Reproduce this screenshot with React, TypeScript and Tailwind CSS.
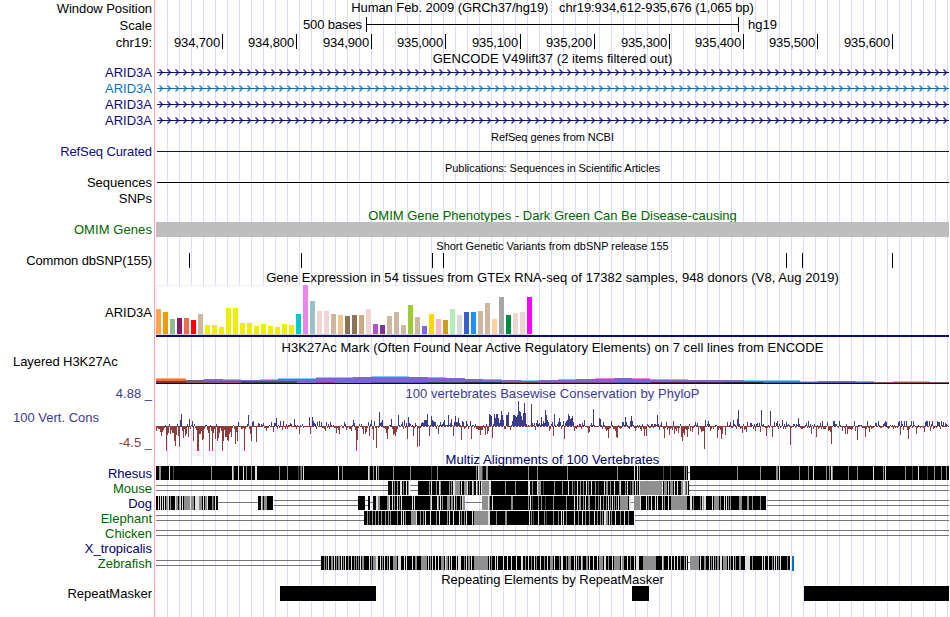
import type { ReactNode } from "react";

// Every track is drawn in browser pixel coordinates: data starts at x=156.
const LEFT = 156;
const WIDTH = 793;
const RIGHT = LEFT + WIDTH;

interface LabelProps {
  children: ReactNode;
  className?: string;
}

const Label = ({ children, className = "" }: LabelProps) => (
  <div className={`flex shrink-0 items-center justify-end whitespace-pre pr-[2px] ${className}`}>
    {children}
  </div>
);

interface TitleProps {
  children: ReactNode;
  className: string;
}

const Title = ({ children, className }: TitleProps) => (
  <div className={`flex shrink-0 items-center justify-center whitespace-pre ${className}`}>{children}</div>
);

interface TrackProps {
  top: number;
  height: number;
  children: ReactNode;
}

const Track = ({ top, height, children }: TrackProps) => (
  <svg
    className="block shrink-0"
    width={WIDTH}
    height={height}
    viewBox={`${LEFT} ${top} ${WIDTH} ${height}`}
    shapeRendering="crispEdges"
  >
    {children}
  </svg>
);

const ticks = [
  { label: "934,700", width: "w-[67px]" },
  { label: "934,800", width: "w-[74px]" },
  { label: "934,900", width: "w-[75px]" },
  { label: "935,000", width: "w-[74px]" },
  { label: "935,100", width: "w-[75px]" },
  { label: "935,200", width: "w-[74px]" },
  { label: "935,300", width: "w-[75px]" },
  { label: "935,400", width: "w-[74px]" },
  { label: "935,500", width: "w-[74px]" },
  { label: "935,600", width: "w-[75px]" },
];

const transcripts = [
  { y: 72, color: "#0c0c78" },
  { y: 88, color: "#0c72b4" },
  { y: 104, color: "#0c0c78" },
  { y: 120, color: "#0c0c78" },
];

const snps = [189, 301, 432, 443, 786, 802, 892];

const repeats = [
  [280, 96],
  [632, 17],
  [804, 145],
];

// GTEx expression bars: [height, tissue colour]
const tissues: [number, string][] = [
  [25, "#ffa54f"], [22, "#ee9a00"], [15, "#8fbc8f"], [16, "#8b1c62"], [16, "#ee6a50"], [14, "#ff0000"],
  [20, "#cdb79e"], [9, "#eeee00"], [9, "#eeee00"], [7, "#eeee00"], [26, "#eeee00"], [26, "#eeee00"],
  [11, "#eeee00"], [11, "#eeee00"], [8, "#eeee00"], [10, "#eeee00"], [8, "#eeee00"], [7, "#eeee00"],
  [10, "#eeee00"], [9, "#eeee00"], [20, "#00cdcd"], [49, "#ee82ee"], [33, "#9ac0cd"], [23, "#eed5d2"],
  [23, "#eed5d2"], [20, "#cdb79e"], [19, "#eec591"], [18, "#8b7355"], [19, "#8b7355"], [19, "#cdaa7d"],
  [25, "#eed5d2"], [10, "#b452cd"], [9, "#7a378b"], [18, "#cdb79e"], [22, "#cdb79e"], [9, "#cdb79e"],
  [29, "#9acd32"], [17, "#cdb79e"], [8, "#7a67ee"], [20, "#ffd700"], [15, "#ffb6c1"], [14, "#cd9b1d"],
  [25, "#b4eeb4"], [19, "#d9d9d9"], [22, "#3a5fcd"], [22, "#1e90ff"], [23, "#cdb79e"], [31, "#cdb79e"],
  [15, "#ffd39b"], [37, "#a6a6a6"], [19, "#008b45"], [21, "#eed5d2"], [22, "#eed5d2"], [37, "#ff00ff"],
];

// H3K27Ac layers: [x, y, width, height, colour], painted back to front
const PURPLE = "#7c64d4";
const CYAN = "#78ccff";
const PINK = "#f484cc";
const layers: [number, number, number, number, string][] = [
  [156, 378, 30, 1, "#ffb860"],
  [156, 379, 30, 2, "#ff6460"],
  [156, 381, 30, 2, "#803438"],
  [186, 380, 74, 3, "#805868"],
  [204, 379, 19, 2, PURPLE],
  [223, 380, 18, 1, PURPLE],
  [223, 379, 18, 1, CYAN],
  [241, 380, 56, 2, PURPLE],
  [260, 379, 18, 1, CYAN],
  [278, 379, 38, 2, PURPLE],
  [278, 378, 38, 1, CYAN],
  [241, 381, 75, 1, "#5c5078"],
  [297, 380, 19, 3, PURPLE],
  [316, 378, 37, 5, PURPLE],
  [316, 377, 37, 1, CYAN],
  [353, 377, 75, 6, PURPLE],
  [371, 376, 38, 1, CYAN],
  [428, 378, 37, 4, PURPLE],
  [428, 377, 18, 1, PINK],
  [465, 379, 37, 3, PURPLE],
  [483, 379, 19, 1, PINK],
  [502, 380, 74, 2, PURPLE],
  [521, 380, 18, 1, CYAN],
  [558, 379, 18, 1, PINK],
  [576, 379, 112, 3, PURPLE],
  [688, 380, 56, 2, PURPLE],
  [595, 378, 55, 1, PINK],
  [614, 378, 18, 1, PURPLE],
  [650, 379, 19, 1, PINK],
  [669, 379, 19, 1, CYAN],
  [744, 380, 56, 1, CYAN],
  [744, 381, 112, 1, PURPLE],
  [800, 381, 18, 1, CYAN],
  [744, 382, 130, 1, "#4c58a8"],
  [856, 381, 18, 1, PINK],
  [874, 382, 75, 1, "#905060"],
  [893, 381, 37, 1, CYAN],
  [241, 382, 56, 1, "#344c50"],
  [316, 382, 18, 1, "#8c3890"],
  [371, 382, 57, 1, "#5450b0"],
  [428, 382, 37, 1, "#344c50"],
  [465, 382, 37, 1, "#24384c"],
  [502, 382, 37, 1, "#80404c"],
  [539, 382, 74, 1, "#804c84"],
  [613, 382, 38, 1, "#4c54a4"],
  [651, 382, 74, 1, "#582c40"],
  [725, 382, 38, 1, "#28303c"],
];

// PhyloP scores in pixels, rows of twelve columns: [x, ...scores]
const phylop: number[][] = [
  [155, 0, -5, -2, -3, -3, -6, -10, -6, -4, -2, 1, -24],
  [167, -9, -7, 2, -8, -4, -7, -7, -15, -20, -9, 2, -10],
  [179, -21, 6, 12, -5, -12, -3, -10, -8, 2, -11, 7, -3],
  [191, 1, 5, -15, 2, -2, -4, -24, -24, -8, -8, -5, -14],
  [203, -13, -3, 1, 1, -4, -7, -24, 1, -5, -24, -7, -3],
  [215, -13, 2, -15, -12, -7, -2, -5, -24, -15, -4, -11, -11],
  [227, -14, -15, -8, -6, -11, -2, 1, -3, -18, -6, -15, 4],
  [239, -1, -1, -3, -3, -2, -24, -3, -1, 2, 11, -3, -8],
  [251, -15, 4, 5, -1, -1, -16, -1, 3, 2, -1, 2, 1],
  [263, 3, -2, -2, -5, -2, -2, 1, -1, 4, -1, -6, 3],
  [275, 3, 8, -3, 1, -2, 5, -1, -4, 5, -1, -3, 2],
  [287, -3, 1, 1, 3, 2, -1, -1, 7, 1, -3, 1, -1],
  [299, -8, 1, -1, 2, -2, -1, -1, -1, -1, -1, 9, -8],
  [311, -1, 9, 5, 3, 2, -3, 4, -1, 5, -1, 4, -2],
  [323, -2, -3, -5, 4, -2, 2, -3, 4, 1, -1, 1, -2],
  [335, -2, -7, -2, -4, -8, -1, 1, -2, -2, 4, 2, -4],
  [347, -2, -1, -3, -3, -5, 1, 6, 3, -4, -24, -14, -2],
  [359, 2, -1, 2, -3, -8, -1, -8, -6, -2, 4, -10, 2],
  [371, 6, -3, -14, 5, -2, -22, -1, -2, 14, 3, 4, 6],
  [383, -2, -2, -3, -7, -13, -3, 1, 1, 7, -3, -9, -8],
  [395, -10, -6, -3, 11, 1, -1, 2, 4, -3, 6, -2, 3],
  [407, -13, 9, 3, 2, -1, 1, -10, -2, 3, 1, -21, -2],
  [419, -20, -2, 3, 4, 3, 6, 6, 6, 12, 1, -10, 1],
  [431, 10, 6, 5, 4, 4, -3, 1, -8, 1, 4, 1, 2],
  [443, 4, 6, 1, 1, 1, 11, 1, 3, 7, 1, -10, 4],
  [455, 10, 4, 4, 8, 3, 1, -14, 5, 4, -3, -2, 5],
  [467, 2, -3, -1, 5, -13, 1, 1, -2, 2, -3, -3, -4],
  [479, -4, -9, -4, -4, 1, -2, -9, 2, -8, -5, 12, 11],
  [491, 10, -12, 2, 12, 8, 12, 12, 8, 3, 6, 15, 11],
  [503, 6, -3, -3, 11, 11, 14, -1, -4, 1, 5, 11, 11],
  [515, 10, 9, 11, 25, 15, 14, 10, 6, 13, 23, 13, 2],
  [527, -1, 1, -1, 1, 22, 3, 1, 3, -4, 3, 6, 2],
  [539, 3, 1, 9, 2, 5, 3, 16, 11, 6, 4, -5, -3],
  [551, 2, 4, -10, 12, 1, -1, 2, 4, 8, 4, -3, 1],
  [563, 5, -13, 3, 5, 6, 12, 10, 7, 8, 10, 4, -5],
  [575, -2, -3, 1, -1, 2, 2, -3, 3, 1, 6, -1, -1],
  [587, -2, -7, -6, 1, 3, 1, 17, 1, -1, -1, -1, -1],
  [599, 8, 7, 1, -3, 4, 1, -3, -5, -4, -12, -3, -2],
  [611, 5, 1, -3, -3, -5, -11, -12, 1, -2, -3, -2, 4],
  [623, 4, 1, 9, 4, 1, -2, -3, 5, 10, 5, 1, -2],
  [635, -5, -2, 1, -2, 1, -3, -5, 2, -3, -10, -3, -10],
  [647, 2, 1, -2, -2, 2, 2, -2, 2, 2, 1, 11, 2],
  [659, -4, 1, 4, -1, -3, -12, -2, 4, -4, -2, -9, -3],
  [671, -2, -4, 5, -8, -3, -5, -2, -7, -2, 2, -11, -15],
  [683, -7, -9, -3, -4, -11, -3, 2, -5, -1, -6, -2, 1],
  [695, 4, 1, 3, -9, -1, -3, -6, -5, -5, -23, 6, -1],
  [707, 2, 5, 2, -5, -3, -1, -3, -1, 1, 1, -12, -4],
  [719, -2, -4, -13, -8, -1, -1, -9, -1, 4, -1, 1, 4],
  [731, -2, -2, 6, 2, 1, -3, 7, 16, 2, -3, -2, -7],
  [743, 2, -4, -3, -6, 4, -1, -1, 3, 3, 1, -3, 2],
  [755, -5, 2, 3, -1, 3, -6, 16, 1, 2, -1, -2, -10],
  [767, -2, 1, -2, 15, -1, -11, -1, 4, -1, 3, 5, -3],
  [779, 2, -2, -1, 6, -3, 2, -3, 4, 1, 2, 1, -19],
  [791, -2, -1, 2, 2, -2, 2, 1, 8, 2, -2, -3, -3],
  [803, -2, -2, 1, 3, -2, 5, -2, 2, -8, 1, -3, 2],
  [815, -1, -11, 1, -3, -2, 3, -3, 5, -3, -3, -3, -1],
  [827, 4, -5, -4, -6, -18, -1, 5, 5, 2, 2, -1, -2],
  [839, 5, 1, -1, -5, -1, -2, -8, 2, -8, -3, -3, -3],
  [851, -4, -3, -1, 5, -5, -1, -14, 1, 1, 1, 1, -2],
  [863, -2, -2, -11, -3, 5, -2, -6, 1, -3, -2, -2, -1],
  [875, 3, 3, -1, 5, 1, -2, -2, -1, 2, 3, 5, 4],
  [887, -2, -3, -2, 1, -1, 1, -3, 1, -2, -1, -2, 4],
  [899, 5, -9, 5, 2, -4, 5, -1, 5, -4, -13, -3, 1],
  [911, 5, -2, 5, 1, -1, -8, -2, 1, -1, -2, -1, -1],
  [923, -2, -6, 4, 5, 5, -1, 5, -5, 2, 5, -3, -2],
  [935, -1, -2, 5, 4, 4, -3, 5, 1, 4, -1, 3, 2],
  [947, 1, -1],
];

interface Species {
  top: number;
  blocks: number[][];
  single?: number[][];
  double?: number[][];
  marks: string;
}

// Marks are "<x><shade><width>" stripes over the black alignment blocks.
const shades: Record<string, string> = { g: "#8f8f8f", l: "#e0e0e0", d: "#484848", w: "#ffffff" };

const alignments: Species[] = [
  {
    top: 466,
    blocks: [[156, 949]],
    marks:
      "159g2 169l1 173d1 211g1 232l1 233g1 238l1 243l1 246g1 251g1 255l2 279g1 287g1 298d1 300d1 301g1 303l1 338l1 342g1 368l1 369g1 373g1 376l1 378g1 393g1 410g1 431d1 437g1 476g1 478l1 479g3 482d1 486g2 528g1 537g1 567g1 617g1 634l1 637l1 639g1 663d1 670d1 684g1 686g1 688w2 737g1 760g1 776g2 779l1 799g1 808g1 813l1 826g1 829g1 831l1 832g1 848g1 857g1 873l1 883g1 885l1 905g1 912d1 918l1 927d1 934g1 941g1 946g1",
  },
  {
    top: 481,
    blocks: [[388, 409], [418, 689]],
    double: [[156, 388], [410, 418], [689, 949]],
    marks:
      "392l1 394g1 397g1 400l2 403g1 406l1 408g1 429g1 431l1 436g1 439l1 440g1 449g1 451g1 453l2 455g5 461l1 464g3 467l1 469d1 472l1 473g1 476l1 477g1 479l1 481l1 482g7 489l2 505g1 515g1 528l2 532g1 537l1 538g2 540g1 543d1 554g1 562g1 568l1 572g1 574d1 577l1 580g1 583g1 586l1 588g1 591l1 595g1 598d1 604l1 606g2 610g1 614l1 619g1 620l1 625g1 627l1 630d1 632g2 635l1 637g1 639l1 640g22 662l1 664g3 668l1 670g3 674l1 677l1 681g2 683l2 685g1 686d1 687l1",
  },
  {
    top: 496,
    blocks: [[156, 218], [258, 273], [358, 365], [368, 370], [373, 465], [482, 631], [634, 766]],
    single: [[218, 258], [370, 373], [465, 482], [631, 634]],
    double: [[274, 358], [365, 368], [767, 949]],
    marks:
      "158l1 160l1 162l1 164l1 166g2 168l1 170g1 175l1 176g2 179g1 180l1 182l1 184g6 190l1 191g3 195l4 199g3 203l1 205g2 207l1 212g1 213d1 215l1 261l1 262g1 264g3 376l2 378g2 387g2 389l1 392l1 394g1 397l1 399g1 401l1 412l1 414l1 430g1 431l1 437l1 438g1 440l1 442g1 447g3 451g2 454l1 456g1 460g1 462l1 463g2 482g6 488l1 489g1 492l1 511g2 528g1 530l1 532d1 538g1 541g1 545d1 553g1 566g1 574l1 577l1 579g2 583g1 585l1 588g2 595g1 598g1 600l1 603g1 606g1 608l1 610g1 612l1 614g1 616g1 618l1 620g8 629l2 634g6 640l1 646l1 648g1 651l1 655l1 657l1 662l1 664g1 668l1 671g9 680g7 690l2 693g1 700g1 702l1 703g1 704l2 712l1 714g5 720g1 724l1 726l1 728g1 730g1 739g3 747g2 752g1 760g1",
  },
  {
    top: 511,
    blocks: [[364, 634]],
    double: [[156, 364], [635, 949]],
    marks:
      "367g1 369d1 372g1 375g1 378g1 381g1 385g1 388g1 390g1 397g1 401l1 403l1 405g1 411g5 416l1 420g1 423g1 425l1 430l1 436g1 439l1 447g1 449l1 453l1 459l1 461g1 464g1 466l1 472l1 474g14 488l2 496g1 505g2 529l1 531g1 533d1 538l1 544g1 546d1 553g1 558g1 561l1 563l1 566g1 574l1 578g1 582l1 585g1 589g1 594l1 597g1 600g1 602g1 604l2 606g2 609l1 611g1 615l1 620g1 624l1 628g1",
  },
  { top: 526, blocks: [], double: [[156, 949]], marks: "" },
  {
    top: 556,
    blocks: [[321, 790]],
    double: [[156, 321]],
    marks:
      "324g1 326g1 328l1 331g2 334l1 336g1 338g2 341l1 343g1 345l1 348g1 351l1 354g1 356g1 358g1 360l1 362g2 369l1 371g1 373g3 376l2 380l1 382g1 384l1 387g1 389l1 393g4 398l3 404l1 406l1 412l1 415g2 421g6 428l1 430g1 432l1 435l1 438l1 441g3 445l1 446g2 449l1 451l1 456l1 458l3 464g1 466l1 468g2 471l1 474g14 489l1 491g1 495l1 497l1 503l1 507l1 511l1 516l1 521l2 525g1 528l1 531g1 534l1 536g1 540l1 544g1 547l1 550g3 554l1 559g1 561l2 566g1 568g3 574l1 576l1 578g1 581l1 582g1 586g2 589l1 593l1 597l1 599g4 604l2 608g1 612l1 614g6 621l1 622g2 627l1 630g1 634l1 636l3 643g2 645g11 662l1 663g1 668l1 671l1 674l1 677l1 680g1 684g1 686l1 688w2 690g9 700l1 704g2 709l1 711g1 713l1 715g1 717g2 720l2 723g4 728l1 730g1 733l1 735g1 739g2 745l5 752g1 762l1 764l1 768l1 772g1 774l1 776l1 778g1 780l1 787g1",
  },
];

const PhyloPWiggle = () => (
  <Track top={401} height={51}>
    {phylop.flatMap(([x0, ...scores]) =>
      scores.map((score, i) => {
        const x = x0 + i;
        if (x < LEFT) return null;
        return (
          <g key={x}>
            {score > 0 ? (
              <rect x={x} y={426 - score} width={1} height={score} fill="#3c3c8c" />
            ) : (
              <rect x={x} y={426} width={1} height={Math.max(1, -score)} fill="#8c3c3c" />
            )}
            {score > 0 && i % 3 !== 0 && <rect x={x} y={426} width={1} height={1} fill="#8c3c3c" />}
            {score <= -24 && <rect x={x} y={449} width={1} height={2} fill="#ff00ff" />}
          </g>
        );
      }),
    )}
  </Track>
);

const AlignmentRow = ({ top, blocks, single = [], double = [], marks }: Species) => (
  <g>
    {double.map(([from, to]) => (
      <g key={from} fill="#757575">
        <rect x={from} y={top + 4} width={to - from} height={1} />
        <rect x={from} y={top + 9} width={to - from} height={1} />
      </g>
    ))}
    {single.map(([from, to]) => (
      <rect key={from} x={from} y={top + 6} width={to - from} height={1} fill="#757575" />
    ))}
    {blocks.map(([from, to]) => (
      <rect key={from} x={from} y={top} width={to - from} height={14} />
    ))}
    {marks.split(" ").filter(Boolean).map((mark) => {
      const [, x, shade, width] = mark.match(/(\d+)([a-z])(\d+)/)!;
      return <rect key={mark} x={x} y={top} width={width} height={14} fill={shades[shade]} />;
    })}
  </g>
);

const Labels = () => (
  <div className="flex w-[154px] shrink-0 flex-col">
    <Label className="h-[17px] tracking-[-0.06px]">Window Position</Label>
    <Label className="h-[17px]">Scale</Label>
    <Label className="h-[17px]">chr19:</Label>
    <div className="mt-[13px] flex flex-col text-[#0c0c78]">
      <Label className="h-[16px]">ARID3A</Label>
      <Label className="h-[16px] text-[#0c72b4]">ARID3A</Label>
      <Label className="h-[16px]">ARID3A</Label>
      <Label className="h-[16px]">ARID3A</Label>
    </div>
    <Label className="mt-[15px] h-[16px] tracking-[-0.1px] text-[#0c0c78]">RefSeq Curated</Label>
    <Label className="mt-[15px] h-[16px]">Sequences</Label>
    <Label className="mt-px h-[15px]">SNPs</Label>
    <Label className="mt-4 h-[15px] tracking-[0.08px] text-[#006400]">OMIM Genes</Label>
    <Label className="mt-4 h-[15px] tracking-[-0.12px]">Common dbSNP(155)</Label>
    <Label className="mt-[37px] h-[15px]">ARID3A</Label>
    <Label className="mt-[34px] h-[15px] justify-start pl-[13px] tracking-[-0.06px]">Layered H3K27Ac</Label>
    <Label className="mt-[17px] h-[15px] text-[#3c3c8c]">4.88 _</Label>
    <Label className="mt-[9px] h-[15px] justify-start pl-[13px] text-[#3c3c8c]">100 Vert. Cons</Label>
    <Label className="mt-[10px] h-[15px] text-[#8c3c3c]">-4.5 _</Label>
    <div className="mt-4 flex flex-col text-[#006400]">
      <Label className="h-[15px] text-[#000064]">Rhesus</Label>
      <Label className="h-[15px]">Mouse</Label>
      <Label className="h-[15px] text-[#000064]">Dog</Label>
      <Label className="h-[15px]">Elephant</Label>
      <Label className="h-[15px]">Chicken</Label>
      <Label className="h-[15px] text-[#000064]">X_tropicalis</Label>
      <Label className="h-[15px]">Zebrafish</Label>
    </div>
    <Label className="mt-[15px] h-[15px]">RepeatMasker</Label>
  </div>
);

const Tracks = () => (
  <div className="flex w-[795px] shrink-0 flex-col border-l border-[#ffaaaa] bg-[linear-gradient(to_right,#dcdcf8_1px,transparent_1px)] bg-[length:12px_100%] bg-clip-content pl-px">
    <Title className="h-[15px] tracking-[-0.08px]">
      {"Human Feb. 2009 (GRCh37/hg19)   chr19:934,612-935,676 (1,065 bp)"}
    </Title>

    <div className="mt-[2px] flex h-[17px] shrink-0">
      <div className="w-[210px] shrink-0 pr-[4px] text-right leading-[16px] tracking-[-0.1px]">500 bases</div>
      <div className="flex h-[15px] w-[373px] shrink-0 flex-col border-x border-black">
        <div className="mt-[7px] h-px bg-black" />
      </div>
      <div className="pl-[9px] leading-[16px]">hg19</div>
    </div>

    <div className="flex h-[17px] shrink-0">
      {ticks.map(({ label, width }) => (
        <div
          key={label}
          className={`h-[15px] shrink-0 border-r border-black pr-[2px] text-right leading-[18px] tracking-[-0.14px] ${width}`}
        >
          {label}
        </div>
      ))}
    </div>

    <Title className="h-[13px] pt-px tracking-[0.03px]">GENCODE V49lift37 (2 items filtered out)</Title>
    <Track top={64} height={64}>
      {transcripts.map(({ y, color }) => (
        <g key={y}>
          <rect x={157} y={y} width={RIGHT - 157} height={1} fill={color} />
          <path
            d={Array.from({ length: 99 }, (_, i) => `M${159.5 + i * 8} ${y - 2.5}l3 3l-3 3`).join("")}
            fill="none"
            stroke={color}
            strokeWidth={1.1}
            shapeRendering="auto"
          />
        </g>
      ))}
    </Track>

    <Title className="h-[16px] pt-[3px] text-[11px] tracking-[-0.06px]">RefSeq genes from NCBI</Title>
    <Track top={144} height={16}>
      <rect x={157} y={151} width={WIDTH} height={1} fill="#0c0c78" />
    </Track>
    <Title className="h-[15px] pt-[2px] text-[11px] tracking-[-0.06px]">
      Publications: Sequences in Scientific Articles
    </Title>
    <Track top={175} height={33}>
      <rect x={157} y={182} width={WIDTH} height={1} />
    </Track>

    <Title className="h-[14px] pt-px text-[#006400]">OMIM Gene Phenotypes - Dark Green Can Be Disease-causing</Title>
    <div className="h-[15px] shrink-0 bg-[#bebebe]" />

    <Title className="h-[16px] pt-[2px] text-[11px] tracking-[-0.02px]">
      Short Genetic Variants from dbSNP release 155
    </Title>
    <Track top={253} height={16}>
      {snps.map((x) => (
        <rect key={x} x={x} y={253} width={1} height={15} />
      ))}
    </Track>

    <Title className="h-[16px] pt-px tracking-[0.06px]">
      Gene Expression in 54 tissues from GTEx RNA-seq of 17382 samples, 948 donors (V8, Aug 2019)
    </Title>
    <Track top={285} height={54}>
      <rect x={156} y={285} width={378} height={50} fill="#f0f0f0" />
      <rect x={157} y={286} width={376} height={48} fill="#ffffff" />
      <rect x={156} y={334} width={378} height={1} fill="#d2d2d2" />
      {tissues.map(([height, color], i) => (
        <rect key={i} x={156 + i * 7} y={334 - height} width={5} height={height} fill={color} />
      ))}
      <rect x={156} y={335} width={WIDTH} height={2} fill="#0c0c78" />
    </Track>

    <Title className="h-[17px] tracking-[0.05px]">
      H3K27Ac Mark (Often Found Near Active Regulatory Elements) on 7 cell lines from ENCODE
    </Title>
    <Track top={356} height={30}>
      {layers.map(([x, y, width, height, color], i) => (
        <rect key={i} x={x} y={y} width={width} height={height} fill={color} />
      ))}
      <rect x={156} y={383} width={WIDTH} height={1} fill="#140c1c" />
    </Track>

    <Title className="h-[15px] tracking-[0.04px] text-[#3c3c8c]">
      100 vertebrates Basewise Conservation by PhyloP
    </Title>
    <PhyloPWiggle />

    <Title className="h-[14px] pt-px tracking-[0.08px] text-[#000064]">Multiz Alignments of 100 Vertebrates</Title>
    <Track top={466} height={106}>
      {alignments.map((row) => (
        <AlignmentRow key={row.top} {...row} />
      ))}
      <rect x={688} y={472} width={2} height={1} fill="#757575" />
      <rect x={688} y={562} width={2} height={1} fill="#757575" />
      <rect x={792} y={556} width={2} height={15} fill="#0070c8" />
    </Track>

    <Title className="h-[14px] pt-px">Repeating Elements by RepeatMasker</Title>
    <Track top={586} height={31}>
      {repeats.map(([x, width]) => (
        <rect key={x} x={x} y={586} width={width} height={15} />
      ))}
    </Track>
  </div>
);

export default function App() {
  return (
    <main className="flex h-[617px] w-[950px] overflow-hidden bg-white font-['Liberation_Sans',Arial,sans-serif] text-[13px] leading-none text-black">
      <Labels />
      <Tracks />
    </main>
  );
}
